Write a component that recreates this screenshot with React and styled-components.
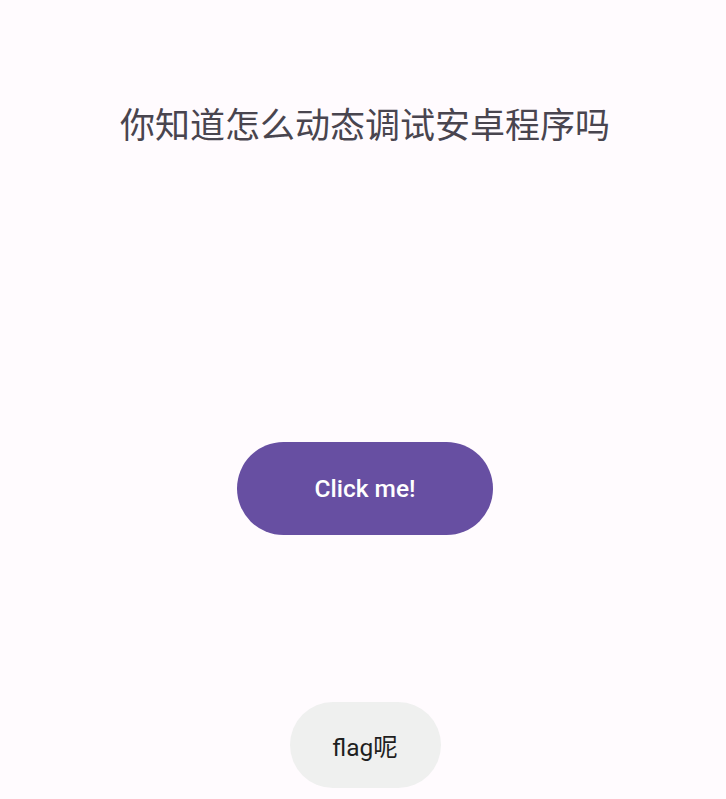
import styled, { createGlobalStyle } from "styled-components";

const Global = createGlobalStyle`
  html, body {
    margin: 0;
    padding: 0;
    background: #fffbfe;
  }
`;

const Screen = styled.div`
  width: 726px;
  height: 799px;
  box-sizing: border-box;
  padding-left: 4px;
  overflow: hidden;
  display: flex;
  flex-direction: column;
  align-items: center;
  background: #fffbfe;
  font-family: Roboto, "Noto Sans CJK SC", sans-serif;
`;

const Title = styled.h1`
  margin: 101px 0 0;
  font-size: 35px;
  line-height: 44px;
  font-weight: 400;
  color: #49454f;
  font-family: "Noto Sans CJK SC", sans-serif;
`;

const PillButton = styled.button`
  border: none;
  border-radius: 999px;
  margin-top: ${(p) => p.top}px;
  width: ${(p) => p.w}px;
  height: ${(p) => p.h}px;
  background: ${(p) => p.bg};
  color: ${(p) => p.fg};
  font-family: Roboto, "Noto Sans CJK SC", sans-serif;
  font-size: 24.5px;
  font-weight: ${(p) => p.weight};
  padding: 0;
  cursor: pointer;
`;

export default function App() {
  return (
    <Screen>
      <Global />
      <Title>你知道怎么动态调试安卓程序吗</Title>
      <PillButton top={297} w={256} h={93} bg="#674fa2" fg="#ffffff" weight={500}>
        Click me!
      </PillButton>
      <PillButton top={167} w={151} h={86} bg="#eff0ef" fg="#1f1f1f" weight={400}>
        flag呢
      </PillButton>
    </Screen>
  );
}
